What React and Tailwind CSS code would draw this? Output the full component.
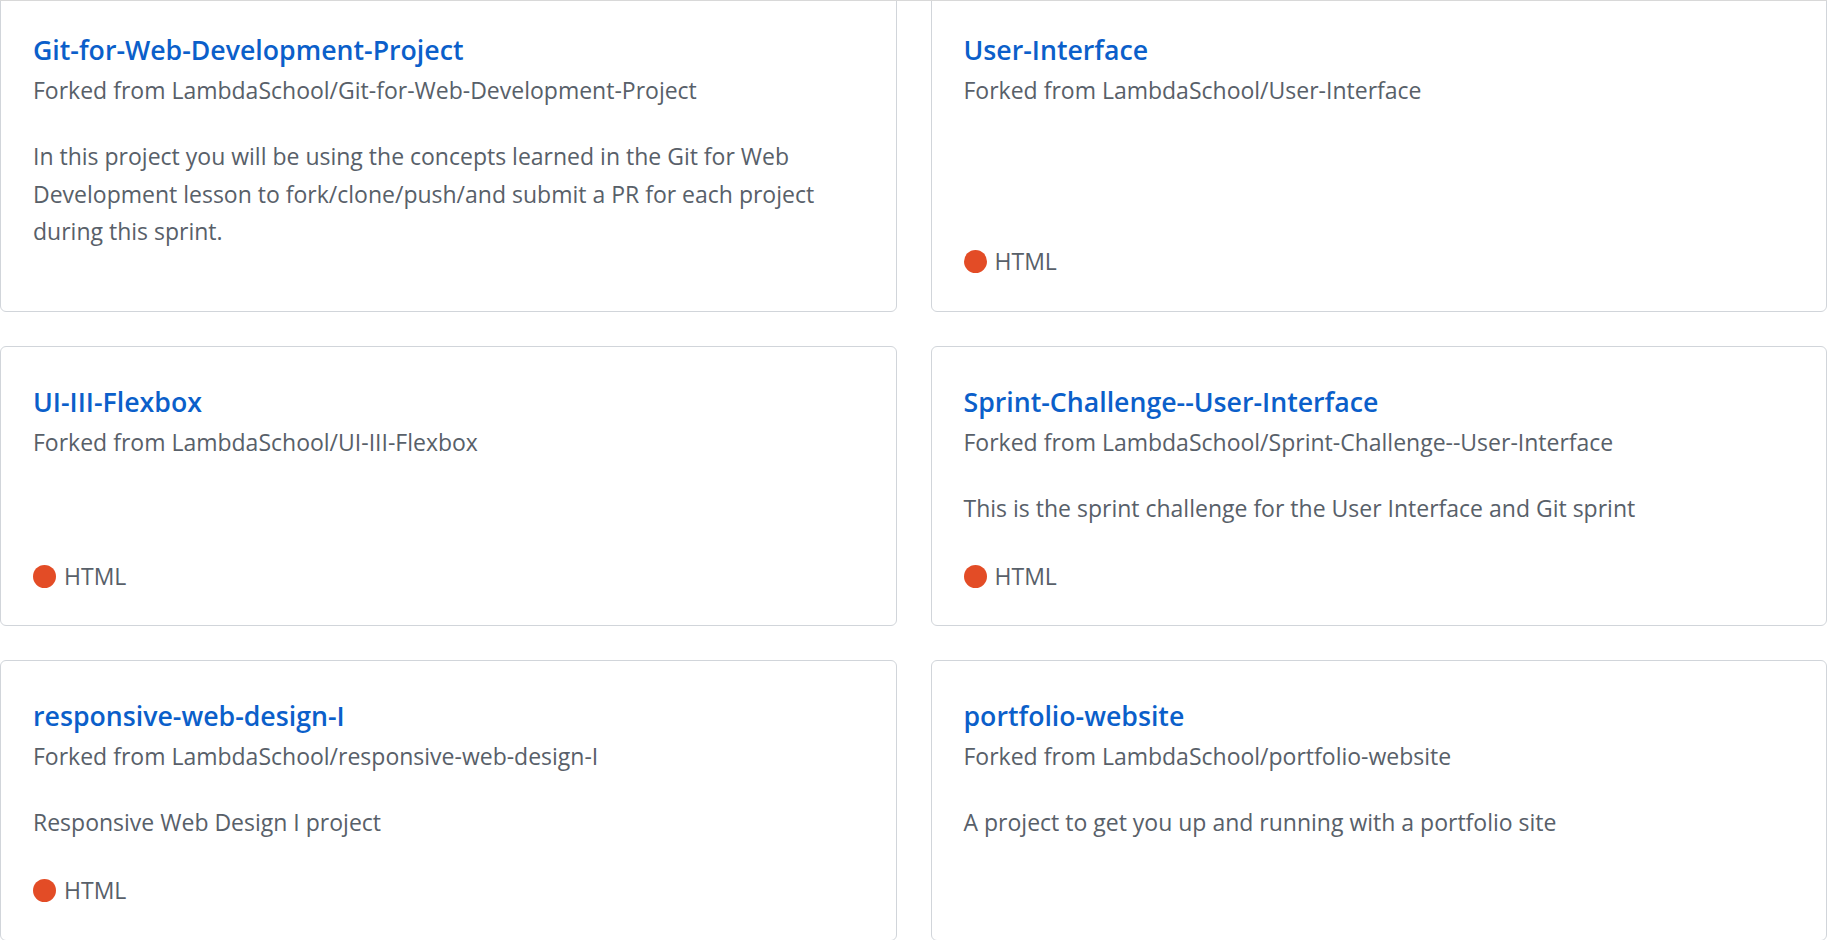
import React from "react";

const repos = [
  {
    name: "Git-for-Web-Development-Project",
    desc: "In this project you will be using the concepts learned in the Git for Web Development lesson to fork/clone/push/and submit a PR for each project during this sprint.",
    lang: false,
  },
  { name: "User-Interface", desc: "", lang: true },
  { name: "UI-III-Flexbox", desc: "", lang: true },
  {
    name: "Sprint-Challenge--User-Interface",
    desc: "This is the sprint challenge for the User Interface and Git sprint",
    lang: true,
  },
  { name: "responsive-web-design-I", desc: "Responsive Web Design I project", lang: true },
  {
    name: "portfolio-website",
    desc: "A project to get you up and running with a portfolio site",
    lang: false,
  },
];

function Card({ repo }) {
  return (
    <div className="flex flex-col rounded-md border border-[#d1d5da] bg-white px-[32px] pt-[35px] pb-[30px]">
      <a className="text-[26.7px] font-semibold leading-[40px] text-[#0b5fca]" href="#">
        {repo.name}
      </a>
      <div className="text-[23px] leading-[40px] text-[#586069]">
        Forked from LambdaSchool/{repo.name}
      </div>
      {repo.desc ? (
        <p className="mt-[28px] mb-[30px] text-[23px] leading-[37.5px] text-[#586069]">{repo.desc}</p>
      ) : null}
      {repo.lang ? (
        <div className="mt-auto flex h-[38px] items-center gap-[8px] text-[23px] text-[#586069]">
          <span className="inline-block h-[23px] w-[23px] rounded-full bg-[#e34c26]"></span>
          <span>HTML</span>
        </div>
      ) : null}
    </div>
  );
}

export default function App() {
  return (
    <div
      className="h-[940px] overflow-hidden border-t border-[#d8d8d8] bg-white"
      style={{ fontFamily: '"Open Sans", "Noto Sans", sans-serif' }}
    >
      <div className="-mt-[7px] grid grid-cols-2 gap-x-[34px] gap-y-[34px]">
        {repos.map((r) => (
          <Card key={r.name} repo={r} />
        ))}
      </div>
    </div>
  );
}
